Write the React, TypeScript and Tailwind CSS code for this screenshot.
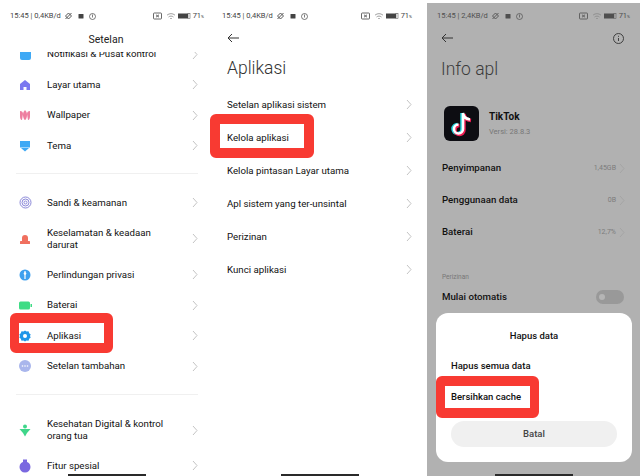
import React from 'react'

type RowProps = {
  icon?: React.ReactNode
  label: React.ReactNode
  height: string
  value?: string
}

function Chevron({ color = '#c4c4c4' }: { color?: string }) {
  return (
    <svg width="6" height="11" viewBox="0 0 6 11" fill="none" className="shrink-0">
      <path d="M1 1l4 4.5-4 4.5" stroke={color} strokeWidth="1" />
    </svg>
  )
}

function StatusBar({ speed, color = '#444' }: { speed: string; color?: string }) {
  return (
    <div className="flex items-center justify-between h-[12px] text-[7.5px] leading-none" style={{ color }}>
      <div className="flex items-center gap-[3px]">
        <span>15:45 | {speed}</span>
        <svg width="9" height="8" viewBox="0 0 8 8" fill="none" stroke={color} strokeWidth="0.9">
          <path d="M1 4l3-3 3 3-3 3zM1 7l6-6" />
        </svg>
        <svg width="6" height="6" viewBox="0 0 6 6" fill={color} className="ml-[2px]">
          <rect x="0.5" y="1" width="5" height="4.5" rx="0.5" />
        </svg>
        <svg width="7" height="7" viewBox="0 0 7 7" fill="none" stroke={color} strokeWidth="0.7" className="ml-[2px]">
          <circle cx="3.5" cy="3.5" r="3" />
          <path d="M3.5 1.5v3" />
        </svg>
      </div>
      <div className="flex items-center gap-[2px]">
        <svg width="9" height="8" viewBox="0 0 9 8" fill="none" stroke={color} strokeWidth="0.8">
          <rect x="0.5" y="1" width="8" height="6" rx="0.8" />
          <path d="M3 2.8l3 2.4M6 2.8l-3 2.4" />
        </svg>
        <svg width="10" height="7" viewBox="0 0 9 7" fill="none" stroke="#888" strokeWidth="0.8" className="ml-[2px]">
          <path d="M0.5 2.200c2.400-2 5.600-2 8 0M2 4c1.500-1.200 3.500-1.200 5 0M3.500 5.800c.6-.5 1.400-.5 2 0" />
        </svg>
        <svg width="13" height="6" viewBox="0 0 13 6">
          <rect x="0" y="0.500" width="10" height="5" fill={color} />
          <rect x="10" y="0.500" width="2" height="5" fill="none" stroke={color} strokeWidth="0.5" />
        </svg>
        <span>
          71<span className="text-[4px]">%</span>
        </span>
      </div>
    </div>
  )
}

function Row({ icon, label, height, value }: RowProps) {
  return (
    <div className={`flex items-center ${height}`}>
      {icon && <div className="w-[31px] shrink-0 flex items-center pl-[3px]">{icon}</div>}
      <div className="flex-1 text-[9.7px] leading-[12px] text-[#111]">{label}</div>
      {value && <span className="text-[7px] text-[#7c7c7c] mr-[3px]">{value}</span>}
      <Chevron color={value ? '#a5a5a5' : '#c4c4c4'} />
    </div>
  )
}

function HomeBar() {
  return <div className="absolute bottom-0 left-1/2 -translate-x-1/2 w-[78px] h-[2px] bg-[#2a2a2a]" />
}

function Highlight({ className }: { className: string }) {
  return <div className={`absolute border-[#f83a32] border-solid rounded-[6px] ${className}`} />
}

const IconHome = (
  <svg width="12" height="12" viewBox="0 0 12 12">
    <path d="M6 1L1 5v6h3.500V8h3v3H11V5z" fill="#7b78f0" />
  </svg>
)
const IconWall = (
  <svg width="12" height="12" viewBox="0 0 12 12" fill="#ee7fa0">
    <path d="M1 2c2 0 3 1 3 3l-1 6C1.500 11 1 9 1 7zM11 2c-2 0-3 1-3 3l1 6c1.500 0 2-2 2-4z" />
    <path d="M6 1c1.500 1.500 2 3 2 5s-1 5-2 5-2-3-2-5 .5-3.500 2-5z" />
  </svg>
)
const IconTheme = (
  <svg width="12" height="12" viewBox="0 0 12 12" fill="#3fa9f5">
    <rect x="1" y="1" width="10" height="6.500" />
    <path d="M2 8h8L6 11.500z" />
  </svg>
)
const IconSecure = (
  <svg width="13" height="13" viewBox="0 0 13 13" fill="none" stroke="#8a88d8" strokeWidth="1">
    <circle cx="6.500" cy="6.500" r="5.500" />
    <circle cx="6.500" cy="6.500" r="3.500" />
    <circle cx="6.500" cy="6.500" r="1.500" />
  </svg>
)
const IconAlert = (
  <svg width="12" height="12" viewBox="0 0 12 12" fill="#f0705f">
    <path d="M3 8V5a3 3 0 0 1 6 0v3z" />
    <rect x="1" y="8" width="10" height="3" rx="0.5" />
  </svg>
)
const IconPrivacy = (
  <svg width="12" height="12" viewBox="0 0 12 12">
    <circle cx="6" cy="6" r="5.500" fill="#3fa0ee" />
    <rect x="5.400" y="2" width="1.200" height="8" fill="#fff" />
    <circle cx="6" cy="4.500" r="1.300" fill="#fff" />
  </svg>
)
const IconBattery = (
  <svg width="13" height="9" viewBox="0 0 13 9">
    <rect x="0" y="0.500" width="11" height="8" rx="1.500" fill="#3fdc85" />
    <rect x="11.500" y="3" width="1.500" height="3" fill="#3fdc85" />
  </svg>
)
const IconApps = (
  <svg width="12" height="12" viewBox="0 0 12 12">
    <path d="M6 0.500l1.500 1 2-.2.700 1.900 1.500 1.300-.7 1.500.7 1.500-1.500 1.300-.7 1.900-2-.2-1.500 1-1.500-1-2 .2-.7-1.900L.300 7.500 1 6 .300 4.500l1.500-1.300.7-1.900 2 .2z" fill="#1f96e8" />
    <circle cx="6" cy="6" r="2" fill="#fff" />
  </svg>
)
const IconMore = (
  <svg width="12" height="12" viewBox="0 0 12 12">
    <circle cx="6" cy="6" r="6" fill="#a9b6ec" />
    <circle cx="3.500" cy="6" r="0.800" fill="#fff" />
    <circle cx="6" cy="6" r="0.800" fill="#fff" />
    <circle cx="8.500" cy="6" r="0.800" fill="#fff" />
  </svg>
)
const IconHealth = (
  <svg width="12" height="13" viewBox="0 0 12 13" fill="#3fd68a">
    <circle cx="6" cy="2.500" r="2" />
    <path d="M0.500 5h11L8 9H4z" />
    <path d="M4 9h4l-2 3.500z" />
  </svg>
)
const IconSpecial = (
  <svg width="12" height="14" viewBox="0 0 12 14" fill="#7a68e0">
    <circle cx="6" cy="8" r="5.500" />
    <rect x="4" y="0.500" width="4" height="2.500" />
  </svg>
)

const Divider = () => <div className="h-px bg-[#f0f0f0]" />

function SettingsPanel() {
  return (
    <div className="relative w-[213px] shrink-0 h-full flex flex-col bg-white">
      <div className="pt-[10px] pl-[10px] pr-[9px]">
        <StatusBar speed="0,4KB/d" />
      </div>
      <div className="text-center text-[10.5px] leading-[14px] text-[#222] mt-[11px] pr-[1px]">Setelan</div>
      <div className="flex-1 overflow-hidden mt-[5px] pl-[16px] pr-[15px]">
        <div className="-mt-[13px]">
          <Row
            height="h-[30px]"
            label="Notifikasi & Pusat kontrol"
            icon={<div className="w-[11px] h-[11px] bg-[#3fa9f5] rounded-[2px] ml-[1px]" />}
          />
          <Row height="h-[31px]" label="Layar utama" icon={IconHome} />
          <Row height="h-[30px]" label="Wallpaper" icon={IconWall} />
          <Row height="h-[31px]" label="Tema" icon={IconTheme} />
          <div className="h-[12px]" />
          <Divider />
          <div className="h-[13px]" />
          <Row height="h-[31px]" label="Sandi & keamanan" icon={IconSecure} />
          <Row height="h-[41px]" label={<>Keselamatan & keadaan<br />darurat</>} icon={IconAlert} />
          <Row height="h-[31px]" label="Perlindungan privasi" icon={IconPrivacy} />
          <Row height="h-[30px]" label="Baterai" icon={IconBattery} />
          <Row height="h-[31px]" label="Aplikasi" icon={IconApps} />
          <Row height="h-[30px]" label="Setelan tambahan" icon={IconMore} />
          <div className="h-[13px]" />
          <Divider />
          <div className="h-[15px]" />
          <Row height="h-[40px]" label={<>Kesehatan Digital & kontrol<br />orang tua</>} icon={IconHealth} />
          <Row height="h-[31px]" label="Fitur spesial" icon={IconSpecial} />
        </div>
      </div>
      <HomeBar />
    </div>
  )
}

function BackArrow({ color = '#333' }: { color?: string }) {
  return (
    <svg width="13" height="10" viewBox="0 0 13 10" fill="none" stroke={color} strokeWidth="1">
      <path d="M12 5H1M5 1L1 5l4 4" />
    </svg>
  )
}

function AppsPanel() {
  return (
    <div className="relative w-[214px] shrink-0 h-full flex flex-col bg-white pl-[14px] pr-[15px]">
      <div className="pt-[10px] -ml-[5px] mr-[0px]">
        <StatusBar speed="0,4KB/d" />
      </div>
      <div className="mt-[10px] h-[12px] flex items-center">
        <BackArrow />
      </div>
      <div className="text-[17.5px] leading-[22px] font-light text-[#333] mt-[13px]">Aplikasi</div>
      <div className="mt-[9px]">
        <Row height="h-[33px]" label="Setelan aplikasi sistem" />
        <Row height="h-[33px]" label="Kelola aplikasi" />
        <Row height="h-[33px]" label="Kelola pintasan Layar utama" />
        <Row height="h-[33px]" label="Apl sistem yang ter-unsintal" />
        <Row height="h-[33px]" label="Perizinan" />
        <Row height="h-[33px]" label="Kunci aplikasi" />
      </div>
      <HomeBar />
    </div>
  )
}

function InfoPanel() {
  return (
    <div className="relative flex-1 h-full bg-white pt-[3px]">
      <div className="h-full bg-[#b1b1b1] pl-[14px] pr-[15px]">
        <div className="pt-[7px] -ml-[4px] -mr-[5px]">
          <StatusBar speed="2,4KB/d" color="#4f4f4f" />
        </div>
        <div className="mt-[10px] h-[12px] flex items-center justify-between pr-[1px]">
          <BackArrow />
          <svg width="11" height="11" viewBox="0 0 11 11" fill="none" stroke="#333" strokeWidth="0.9">
            <circle cx="5.500" cy="5.500" r="5" />
            <path d="M5.500 5v3M5.500 2.800v1" />
          </svg>
        </div>
        <div className="text-[17.5px] leading-[22px] font-light text-[#3c3c3c] mt-[14px]">Info apl</div>
        <div className="flex items-center mt-[26px] ml-[3px]">
          <svg width="35" height="35" viewBox="0 0 35 35">
            <rect width="35" height="35" rx="6" fill="#0d0d12" />
            <path d="M19 7v16a4.500 4.500 0 1 1-4.500-4.500M19 7c.5 3.500 3 6 7 6.500" fill="none" stroke="#25d4dc" strokeWidth="3.500" transform="translate(-1 0)" />
            <path d="M19 7v16a4.500 4.500 0 1 1-4.500-4.500M19 7c.5 3.500 3 6 7 6.500" fill="none" stroke="#ee1d52" strokeWidth="3.500" transform="translate(1 1)" />
            <path d="M19 7v16a4.500 4.500 0 1 1-4.500-4.500M19 7c.5 3.500 3 6 7 6.500" fill="none" stroke="#fff" strokeWidth="2.600" />
          </svg>
          <div className="ml-[10px]">
            <div className="text-[10px] leading-[12px] font-bold text-[#111]">TikTok</div>
            <div className="text-[7.5px] leading-[10px] text-[#777] mt-[4px]">Versi: 28.8.3</div>
          </div>
        </div>
        <div className="mt-[11px] pl-[1px]">
          <Row height="h-[32px]" label={<span className="font-medium text-[#111]">Penyimpanan</span>} value="1,45GB" />
          <Row height="h-[32px]" label={<span className="font-medium text-[#111]">Penggunaan data</span>} value="0B" />
          <Row height="h-[32px]" label={<span className="font-medium text-[#111]">Baterai</span>} value="12,7%" />
        </div>
        <div className="text-[6.5px] leading-[8px] text-[#777] mt-[25px] pl-[1px]">Perizinan</div>
        <div className="flex items-center justify-between mt-[9px] h-[14px] pl-[1px] pr-[1px]">
          <span className="text-[9.7px] font-medium text-[#111]">Mulai otomatis</span>
          <div className="w-[28px] h-[14px] rounded-full bg-[#999] flex items-center pl-[3px]">
            <div className="w-[6px] h-[6px] rounded-full bg-[#b5b5b5]" />
          </div>
        </div>
      </div>
      <div className="absolute left-[9px] right-[8px] bottom-[14px] h-[149px] rounded-[12px] bg-white px-[15px] flex flex-col">
        <div className="text-center text-[9.5px] leading-[12px] font-medium text-[#111] mt-[17px]">Hapus data</div>
        <div className="text-[9.5px] leading-[12px] font-medium text-[#111] mt-[18px]">Hapus semua data</div>
        <div className="text-[9.5px] leading-[12px] font-medium text-[#111] mt-[19px]">Bersihkan cache</div>
        <div className="h-[26px] mt-[18px] rounded-full bg-[#f0f0f0] flex items-center justify-center text-[9.5px] font-medium text-[#444]">Batal</div>
      </div>
      <HomeBar />
    </div>
  )
}

export default function App() {
  return (
    <div className="relative w-[640px] h-[476px] flex overflow-hidden bg-white font-['Roboto',sans-serif]">
      <SettingsPanel />
      <AppsPanel />
      <InfoPanel />
      <Highlight className="left-[10px] top-[313px] w-[103px] h-[40px] border-x-[9px] border-y-[10px]" />
      <Highlight className="left-[210px] top-[114px] w-[104px] h-[44px] border-x-[10px] border-y-[10px]" />
      <Highlight className="left-[436px] top-[376px] w-[103px] h-[42px] border-x-[9px] border-y-[10px]" />
    </div>
  )
}
